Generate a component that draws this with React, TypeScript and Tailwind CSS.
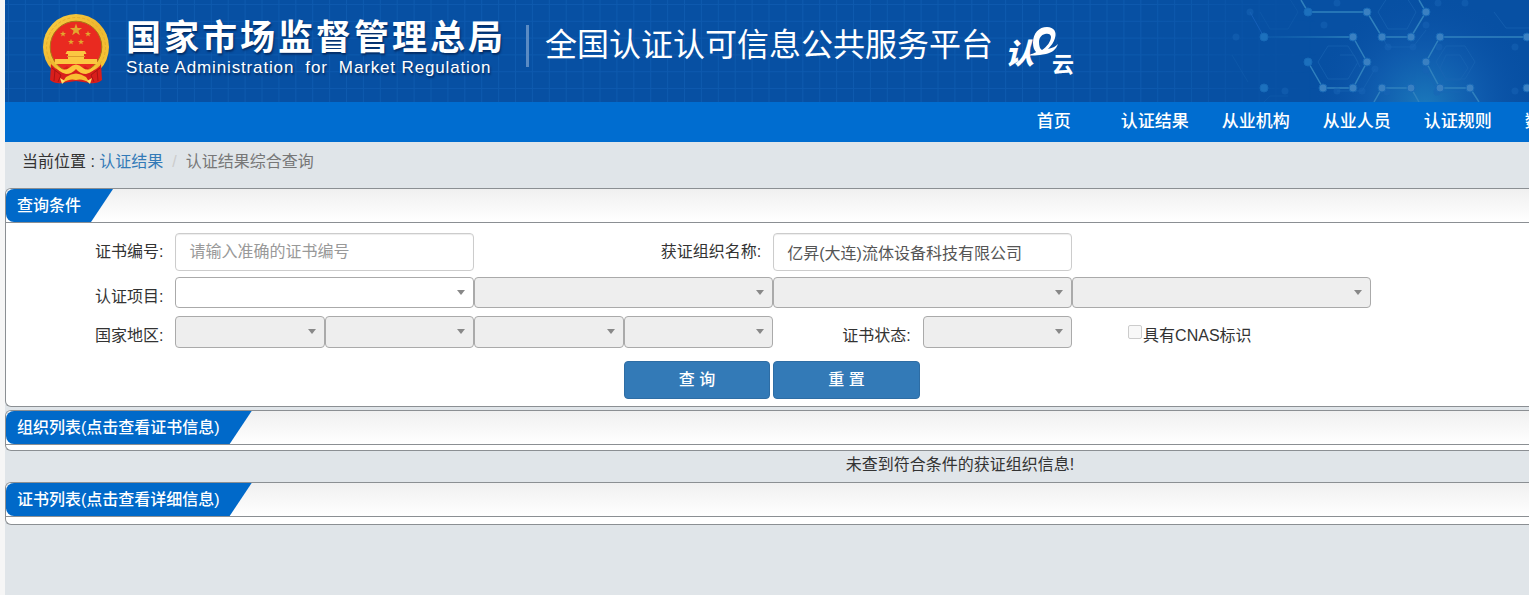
import { useState } from 'react'
import type { ReactNode } from 'react'

const NAV_ITEMS = ['首页', '认证结果', '从业机构', '从业人员', '认证规则', '数据服务']

const STAR = 'M0 -10 L2.4 -3.1 L9.5 -3.1 L3.8 1.2 L5.9 8.1 L0 4 L-5.9 8.1 L-3.8 1.2 L-9.5 -3.1 L-2.4 -3.1 Z'

function Emblem() {
  return (
    <svg viewBox="0 0 68 70" className="h-[70px] w-[68px] flex-none" aria-hidden="true">
      <defs>
        <linearGradient id="gold" x1="0" y1="0" x2="1" y2="1">
          <stop offset="0" stopColor="#f9cf45" />
          <stop offset="0.5" stopColor="#efb82f" />
          <stop offset="1" stopColor="#f8c838" />
        </linearGradient>
      </defs>
      <circle cx="34" cy="33" r="33" fill="url(#gold)" />
      <circle cx="34" cy="33" r="29.5" fill="none" stroke="#e5ad2e" strokeWidth="1" strokeDasharray="3 2" />
      <circle cx="34" cy="33" r="25.8" fill="#e92a20" stroke="#a97717" strokeWidth="1" />
      <g fill="#e3a62e">
        <path d={STAR} transform="translate(34 16) scale(0.64)" />
        <path d={STAR} transform="translate(21 20) scale(0.32)" />
        <path d={STAR} transform="translate(46 20) scale(0.32)" />
        <path d={STAR} transform="translate(29 28) scale(0.32)" />
        <path d={STAR} transform="translate(39 28) scale(0.32)" />
      </g>
      <g fill="#fbc742">
        <path d="M25 37 H43 L44.5 40 H42 V45 H55 V50 H13 V45 H26 V40 H23.5 Z" />
        <path d="M25 42.5 H43" stroke="#dd9a2a" strokeWidth="1" />
      </g>
      <path d="M9 50 Q12 54 18 57 L25 52 Q34 61 43 52 L50 57 Q57 54 59 50 L60 66 Q55 70 48 69 L34 67 L20 69 Q13 70 8 66 Z" fill="#d81e1b" />
      <path d="M10 54 L19 61 L16 68 M58 54 L49 61 L52 68 M13 56 L12 67 M55 56 L56 67" stroke="#a91414" strokeWidth="1" fill="none" />
      <path d="M14 52 Q22 58 27 54 Q34 47 41 54 Q46 58 54 52 Q52 58 44 60 Q38 60 34 55 Q30 60 24 60 Q16 58 14 52 Z" fill="#fcc63b" />
      <path d="M24 63 Q34 56 44 63 L48 69 Q40 64 34 66 Q28 64 20 69 Z" fill="#f8bd32" />
      <path d="M18 64 L23 67 L20 70 Z M50 64 L45 67 L48 70 Z" fill="#ffe06a" />
    </svg>
  )
}

function CloudLogo() {
  return (
    <svg viewBox="0 0 76 60" className="h-[60px] w-[76px] flex-none" role="img" aria-label="认e云">
      <text
        x="0"
        y="39"
        fontSize="29"
        fontWeight="900"
        fontStyle="italic"
        fill="#fff"
        className="font-['Noto_Sans_CJK_SC',sans-serif]"
      >
        认
      </text>
      <path
        fill="#fff"
        fillRule="evenodd"
        d="M28 18 C28 8 34 2 42 2 C49 2 52 7 50 13 C49 17 46 21 43 24 C48 23 51 21 53 19 C51 25 46 28 41 29 C32 31 27 30 22 31 C26 29 30 28 31 27 C29 25 28 22 28 18 Z M34 17 C34 21 35 24 37 25 C42 22 46 16 46 12 C46 9 43 8 40 9 C36 10 34 13 34 17 Z"
      />
      <text
        x="47"
        y="47"
        fontSize="22"
        fontWeight="700"
        fill="#fff"
        className="font-['Noto_Sans_CJK_SC',sans-serif]"
      >
        云
      </text>
    </svg>
  )
}

const NODES = [
  [68, 12], [127, 12], [186, 12], [24, 37], [113, 37], [142, 37], [171, 37], [200, 37],
  [68, 62], [127, 62], [186, 62], [24, 88], [83, 88], [113, 88], [142, 88], [171, 88], [200, 88], [230, 88], [287, 37], [287, 88],
]
const FAINT_NODES = [
  [10, 12], [-4, 37], [97, 3], [84, 25], [148, 47], [173, 47], [199, 47], [135, 69], [186, 70],
  [122, 91], [97, 91], [45, 91], [147, 92], [198, 3], [225, 3], [186, 25], [275, 47], [275, 91], [197, 92],
]

function HeaderBackdrop() {
  return (
    <>
      <svg className="absolute inset-0 h-full w-full" aria-hidden="true">
        <defs>
          <pattern id="grid" width="16.9" height="16.8" patternUnits="userSpaceOnUse" x="3" y="4">
            <path d="M0.5 0 V17 M0 0.5 H17" stroke="#0e5aae" strokeWidth="1" fill="none" />
          </pattern>
          <linearGradient id="gridFade">
            <stop offset="0.75" stopColor="#fff" />
            <stop offset="0.86" stopColor="#000" />
          </linearGradient>
          <mask id="gridMask">
            <rect width="100%" height="100%" fill="url(#gridFade)" />
          </mask>
        </defs>
        <rect width="100%" height="100%" fill="url(#grid)" mask="url(#gridMask)" />
      </svg>
      <svg viewBox="-36 0 325 102" className="absolute right-0 top-0 h-full w-[325px]" fill="none" aria-hidden="true">
        <defs>
          <radialGradient id="glow" gradientUnits="userSpaceOnUse" cx="185" cy="105" r="110">
            <stop offset="0" stopColor="#1b78bb" />
            <stop offset="0.5" stopColor="#115eb0" stopOpacity="0.8" />
            <stop offset="1" stopColor="#0a50a6" stopOpacity="0" />
          </radialGradient>
          <linearGradient id="lineFade" gradientUnits="userSpaceOnUse" x1="24" y1="0" x2="113" y2="0">
            <stop offset="0" stopColor="#176bb6" stopOpacity="0.3" />
            <stop offset="1" stopColor="#2f86bf" />
          </linearGradient>
        </defs>
        <rect x="-36" width="325" height="102" fill="url(#glow)" />
        <g stroke="#1b66b4" strokeWidth="1" opacity="0.6">
          <path d="M149 -5 L138 12 L148 29 H167 L176 12 L165 -5" />
          <path d="M88 46 H108 L118 62 L108 79 H88 L78 62 Z" />
          <path d="M206 46 H225 L235 62 L225 79 H206 L196 62 Z" />
          <path d="M206 55 H220 L228 68 L220 80 H206 L200 68 Z" />
          <path d="M254 12 L266 28 H289 M100 55 H114 L120 67" />
          <path d="M142 37 L148 47 H173 L186 30 M186 70 L198 92 H220 M135 69 L122 91 H97" />
        </g>
        <g stroke="#1b66b4" strokeWidth="1" opacity="0.3">
          <path d="M20 12 L30 29 H48 L58 12 L48 -4 M24 102 L30 96 H48 M-8 55 L8 82" />
        </g>
        <path d="M24 37 H113" stroke="url(#lineFade)" strokeWidth="1.5" />
        <path
          d="M113 37 L127 62 L113 88 H83 L68 62 M61 0 L68 12 H127 L142 37 H171 L186 12 L179 0 M287 37 H200 L186 62 L200 88 H230 L239 102 M134 102 L142 88 H171 L179 102"
          stroke="#3081be"
          strokeWidth="1.5"
        />
        <path d="M10 12 L24 37" stroke="#155fb8" />
        {FAINT_NODES.map(([x, y]) => <circle key={`${x}-${y}`} cx={x} cy={y} r="3.5" fill="#1764b6" opacity="0.5" />)}
        {NODES.map(([x, y]) => (
          <circle key={`${x}-${y}`} cx={x} cy={y} r="4" fill={x < 70 ? '#1c70bd' : '#3a80c2'} stroke="#1769b8" />
        ))}
      </svg>
    </>
  )
}

function Panel({ title, children }: { title: string; children?: ReactNode }) {
  return (
    <section className="overflow-hidden rounded-l-md border-y border-l border-[#8b8f93] bg-white">
      <header className="flex h-[34px] border-b border-[#8b8f93] bg-linear-to-b from-[#f0f0f0] to-white">
        <h2 className="flex items-center rounded-l-lg bg-[#0069c9] pr-8 pl-[11px] text-base font-medium text-white [clip-path:polygon(0_0,100%_0,calc(100%-22px)_100%,0_100%)]">
          {title}
        </h2>
      </header>
      {children}
    </section>
  )
}

type FieldLabelProps = { htmlFor: string; className?: string; children: ReactNode }

function FieldLabel({ htmlFor, className = 'pt-2', children }: FieldLabelProps) {
  return (
    <label htmlFor={htmlFor} className={`self-center pr-3 text-right leading-6 whitespace-nowrap ${className}`}>
      {children}
    </label>
  )
}

type SelectBoxProps = { id?: string; label: string; wide?: boolean; disabled?: boolean }

function SelectBox({ id, label, wide, disabled }: SelectBoxProps) {
  return (
    <div className={wide ? 'relative col-span-2 h-[31px]' : 'relative h-8'}>
      <select
        id={id}
        aria-label={label}
        disabled={disabled}
        className="block h-full w-full appearance-none rounded border border-[#aaa] bg-white px-2 disabled:bg-[#eee] disabled:opacity-100"
      >
        <option value=""></option>
      </select>
      <svg viewBox="0 0 8 5" className="pointer-events-none absolute top-[13px] right-[9px] h-[5px] w-2" aria-hidden="true">
        <path d="M0 0 H8 L4 5 Z" fill="#888" />
      </svg>
    </div>
  )
}

const inputClass =
  'col-span-2 h-[38px] w-full min-w-0 rounded border border-[#ccc] bg-white px-[13px] text-[#555] shadow-[inset_0_1px_1px_rgba(0,0,0,0.075)] outline-none placeholder:text-[#999]'
const buttonClass =
  'h-[38px] w-full rounded border border-[#2e6da4] bg-[#337ab7] font-medium text-white hover:bg-[#286090]'

function SearchForm() {
  const [certNo, setCertNo] = useState('')
  const [orgName, setOrgName] = useState('亿昇(大连)流体设备科技有限公司')

  const reset = () => {
    setCertNo('')
    setOrgName('')
  }

  return (
    <form className="pt-[10px] pr-[158px] pb-[7px] pl-5" onSubmit={(e) => e.preventDefault()}>
      <div className="grid grid-cols-9">
        <FieldLabel htmlFor="certNo" className="pt-0">证书编号:</FieldLabel>
        <input
          id="certNo"
          value={certNo}
          onChange={(e) => setCertNo(e.target.value)}
          placeholder="请输入准确的证书编号"
          className={inputClass}
        />
        <FieldLabel htmlFor="orgName" className="col-start-5 pt-0">获证组织名称:</FieldLabel>
        <input
          id="orgName"
          value={orgName}
          onChange={(e) => setOrgName(e.target.value)}
          className={inputClass}
        />
      </div>

      <div className="mt-[6px] grid grid-cols-9">
        <FieldLabel htmlFor="project">认证项目:</FieldLabel>
        <SelectBox id="project" label="认证项目" wide />
        <SelectBox label="认证项目二级" wide disabled />
        <SelectBox label="认证项目三级" wide disabled />
        <SelectBox label="认证项目四级" wide disabled />
      </div>

      <div className="mt-[7px] grid grid-cols-9">
        <FieldLabel htmlFor="region">国家地区:</FieldLabel>
        <SelectBox id="region" label="国家地区" disabled />
        <SelectBox label="省" disabled />
        <SelectBox label="市" disabled />
        <SelectBox label="区县" disabled />
        <FieldLabel htmlFor="status">证书状态:</FieldLabel>
        <SelectBox id="status" label="证书状态" disabled />
        <div className="col-span-2 flex items-center pl-14">
          <input
            id="cnas"
            type="checkbox"
            disabled
            className="h-[14px] w-[14px] appearance-none rounded-xs border border-[#ccc] bg-[#f8f8f8]"
          />
          <label htmlFor="cnas" className="pt-2 pl-px leading-6">具有CNAS标识</label>
        </div>
      </div>

      <div className="mt-[13px] grid grid-cols-9">
        <div className="col-start-5 -col-end-5 pr-[3px]">
          <button type="submit" className={buttonClass}>查 询</button>
        </div>
        <div className="pr-[3px]">
          <button type="button" onClick={reset} className={buttonClass}>重 置</button>
        </div>
      </div>
    </form>
  )
}

export default function App() {
  return (
    <div className="min-h-screen overflow-hidden bg-[#f6f6f6] pl-[5px] font-['Liberation_Sans','Noto_Sans_CJK_SC',sans-serif] text-base text-[#333]">
      <div className="min-h-screen bg-[#e0e5e9]">
        <header className="relative overflow-hidden bg-[#0750a3]">
          <HeaderBackdrop />
          <div className="relative flex h-[102px] items-start pl-[37px] text-white">
            <div className="flex pt-[14px]">
              <Emblem />
            </div>
            <div className="pt-[18px] pl-4 [text-shadow:1px_2px_2px_rgba(0,20,60,0.6)]">
              <h1 className="text-[35px] leading-10 font-bold tracking-[3px] whitespace-nowrap">国家市场监督管理总局</h1>
              <p className="text-[17px] leading-5 tracking-wider whitespace-pre">State Administration  for  Market Regulation</p>
            </div>
            <div className="mt-[25px] ml-5 h-[42px] w-[3px] flex-none bg-[#5a8bc4]" />
            <p className="pt-[25px] pl-4 text-[32px] leading-10 whitespace-nowrap">全国认证认可信息公共服务平台</p>
            <div className="flex pt-[25px] pl-3">
              <CloudLogo />
            </div>
          </div>
        </header>

        <nav className="flex h-10 overflow-hidden bg-[#006dd0] pl-[65.5%]">
          {NAV_ITEMS.map((item) => (
            <a
              key={item}
              href="#"
              className="flex w-[101px] flex-none items-center justify-center text-[17px] font-medium whitespace-nowrap text-white"
            >
              {item}
            </a>
          ))}
        </nav>

        <div className="flex h-[46px] items-center pb-[7px] pl-[17px]">
          <span className="whitespace-pre">当前位置 : </span>
          <a href="#" className="text-[#337ab7]">认证结果</a>
          <span className="px-[9px] text-[#ccc]">/</span>
          <span className="text-[#777]">认证结果综合查询</span>
        </div>

        <main>
          <Panel title="查询条件">
            <SearchForm />
          </Panel>
          <div className="pt-[3px]">
            <Panel title="组织列表(点击查看证书信息)">
              <div className="h-[5px]" />
            </Panel>
          </div>
          <p className="h-[31px] pl-[386px] text-center leading-7">未查到符合条件的获证组织信息!</p>
          <Panel title="证书列表(点击查看详细信息)">
            <div className="h-[7px]" />
          </Panel>
        </main>
      </div>
    </div>
  )
}
